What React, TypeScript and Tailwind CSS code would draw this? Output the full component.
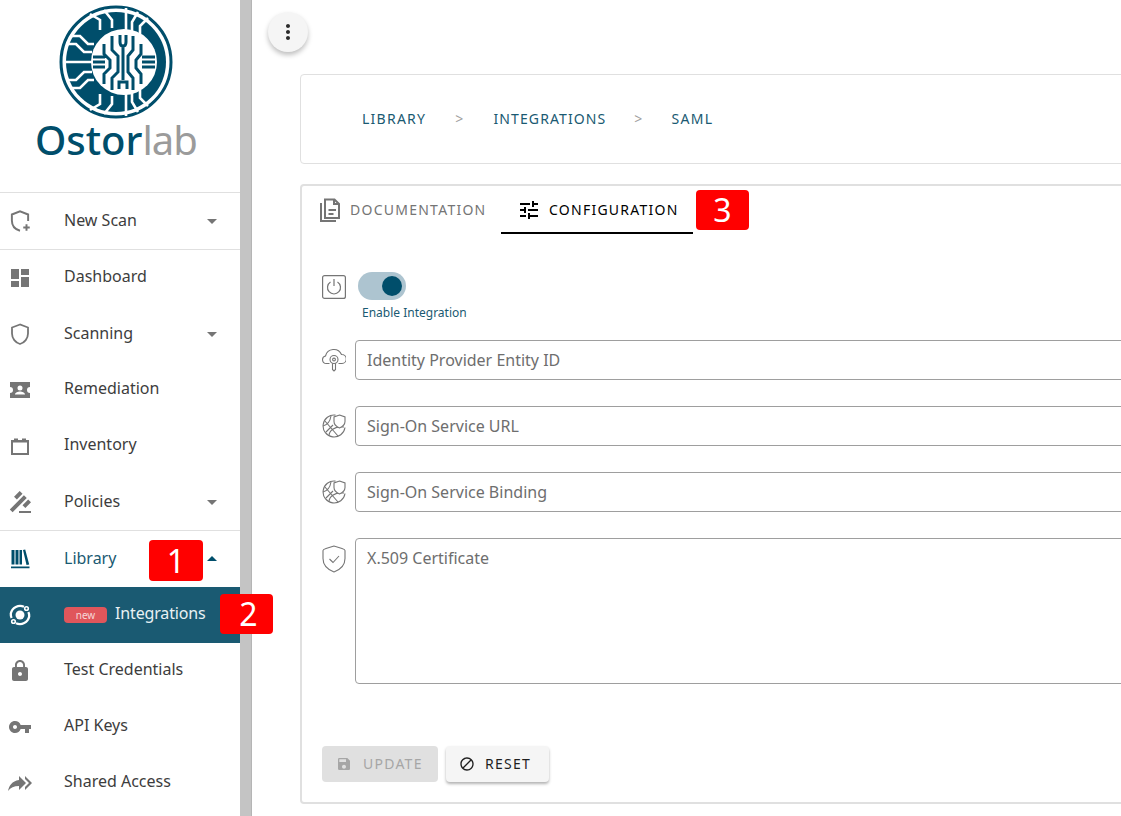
import { MdArrowDropDown, MdArrowDropUp, MdBlock, MdDashboard, MdGavel, MdLock, MdMoreVert, MdSave, MdTune, MdVpnKey } from "react-icons/md";

const font = { fontFamily: '"Noto Sans", sans-serif' };

function Logo() {
  const white = "M90 14 L100 20 L100 30 M104 10 L112 20 L112 28 M126 8 L126 32 M138 12 L132 22 L132 32 M148 18 L140 26 L140 34 M70 36 L80 36 L88 44 L94 44 M66 44 L76 44 L84 52 L92 52 M64 62 L92 62 M66 80 L76 80 L84 72 L92 72 M70 88 L80 88 L88 80 L94 80 M100 94 L100 104 L90 110 M112 96 L112 104 L104 114 M126 92 L126 116 M132 92 L132 102 L138 112 M140 90 L140 98 L148 106";
  const dark = "M120 35 L120 42 Q120 46 123 46 Q126 46 126 42 L126 35 M123 46 L123 80 M112 36 L112 50 L118 56 L118 72 L112 78 L112 90 M133 36 L133 50 L128 56 L128 72 L133 78 L133 90 M104 44 L104 54 L110 60 L110 68 L104 74 L104 84 M141 44 L141 54 L136 60 L136 68 L141 74 L141 84 M93 57 L105 57 M93 62 L105 62 M93 67 L105 67 M142 57 L155 57 M142 62 L155 62 M142 67 L155 67 M119 89 L119 82 L127 82 L127 89";
  return (
    <svg width="116" height="116" viewBox="58 4 116 116" className="block">
      <circle cx="116" cy="62" r="55" fill="none" stroke="#004e6b" strokeWidth="3" />
      <circle cx="116" cy="62" r="50" fill="#004e6b" />
      <circle cx="124" cy="62" r="33" fill="#fff" />
      <path d={white} fill="none" stroke="#fff" strokeWidth="2.6" />
      <path d={dark} fill="none" stroke="#004e6b" strokeWidth="3" />
    </svg>
  );
}

function ShieldPlus() {
  return (
    <svg viewBox="0 0 24 24" className="w-[26px] h-[26px] -ml-px" fill="none" stroke="#757575" strokeWidth="1.800">
      <path d="M19.500 12V6L12 3 4.500 6v5.500c0 4.800 3.200 8.300 7.500 9.500" />
      <path d="M18 15v6M15 18h6" />
    </svg>
  );
}

function Shield() {
  return (
    <svg viewBox="0 0 24 24" className="w-6 h-6" fill="none" stroke="#757575" strokeWidth="1.800">
      <path d="M12 2.500 4 5.500v6c0 5 3.400 9.200 8 10.500 4.600-1.300 8-5.500 8-10.500v-6z" />
    </svg>
  );
}

function Ticket() {
  return (
    <svg viewBox="0 0 24 24" className="w-6 h-6" fill="#757575">
      <path fillRule="evenodd" d="M2 4h20v5a3 3 0 0 0 0 6v5H2v-5a3 3 0 0 0 0-6zM12 7.500a2.500 2.500 0 1 0 0 5 2.500 2.500 0 0 0 0-5zM7 16.500h10c0-2-3-3-5-3s-5 1-5 3z" />
    </svg>
  );
}

function Box() {
  return (
    <svg viewBox="0 0 24 24" className="w-6 h-6" fill="#757575">
      <path fillRule="evenodd" d="M3 6h3V4.500h4V6h4V4.500h4V6h3v15H3zM5 8.500V19h14V8.500z" />
    </svg>
  );
}

function Books() {
  return (
    <svg viewBox="0 0 24 24" className="w-6 h-6" fill="#004e6b">
      <path d="M3.500 3h3v14.500h-3zM7.500 3h3v14.500h-3zM11.500 3h2.500v14.500h-2.500zM15 3l2.200-.5 4 15-2.700.5zM3 19.500h18.500v1.800H3z" />
    </svg>
  );
}

function Orbit() {
  return (
    <svg viewBox="0 0 24 24" className="w-6 h-6" fill="none" stroke="#fff" strokeWidth="2.300">
      <circle cx="12" cy="12" r="4.500" fill="#fff" stroke="none" />
      <path d="M16 3.800A9.500 9.500 0 0 0 2.800 10.500a9.500 9.500 0 0 0 .8 4.500M8 20.200a9.500 9.500 0 0 0 13.200-6.700 9.500 9.500 0 0 0-.8-4.500" />
      <circle cx="18.500" cy="5.500" r="1.800" strokeWidth="1.600" />
      <circle cx="5.500" cy="18.500" r="1.800" strokeWidth="1.600" />
    </svg>
  );
}

function ShareAll() {
  return (
    <svg viewBox="0 0 24 24" className="w-6 h-6" fill="#757575">
      <path d="M11 5l7 7-7 7v-4.100c-5 0-8.500 1.600-11 5.100 1-5 4-10 11-11zM17 8V5l7 7-7 7v-3l4-4z" />
    </svg>
  );
}

function DocIcon() {
  return (
    <svg viewBox="0 0 24 24" className="w-6 h-6" fill="none" stroke="#757575" strokeWidth="2">
      <path d="M7 1.500h9.500L21 6v14H7z" />
      <path d="M3 5v18h15M16 1.500V6h5M10.500 12H18M10.500 16h5" />
    </svg>
  );
}

function PowerBox() {
  return (
    <svg viewBox="0 0 24 24" className="w-6 h-6" fill="none" stroke="#757575" strokeWidth="1.200">
      <rect x="0.600" y="0.600" width="22.800" height="22.800" rx="2" />
      <path d="M8.500 7a6.500 6.500 0 1 0 7 0M12 4v7" />
    </svg>
  );
}

function CloudKey() {
  return (
    <svg viewBox="0 0 24 24" className="w-6 h-6" fill="none" stroke="#757575" strokeWidth="1.100">
      <path d="M7.500 15.500H4.500a3.800 3.800 0 0 1-1-7.500A8.500 8.500 0 0 1 19.500 6.500 4.500 4.500 0 0 1 20 15.500h-3.500" />
      <circle cx="12" cy="11.500" r="4" fill="#fff" />
      <circle cx="12" cy="11.500" r="1.400" />
      <path d="M10.500 15.300v6.200l1.500 1.500 1.500-1.500v-6.200" />
    </svg>
  );
}

function GlobeShield() {
  return (
    <svg viewBox="0 0 24 24" className="w-6 h-6" fill="none" stroke="#757575" strokeWidth="1.100">
      <path d="M13.500 1.100A11 11 0 1 0 23 13.500" />
      <path d="M1 12c4-1 7-4 8-10M2.500 6.500 16 22M7 22c0-5 5-10 15-9M4 18l7-7" />
      <path d="M17.500 1l5.500 2v4.500c0 3-2.300 5-5.500 6.500-3.200-1.500-5.500-3.500-5.500-6.500V3z" fill="#fff" />
    </svg>
  );
}

function ShieldCheck() {
  return (
    <svg viewBox="0 0 24 28" className="w-6 h-7" fill="none" stroke="#757575" strokeWidth="1.100">
      <path d="M12 1 4 3.500C2.500 4 1 4.500 1 5.500v8c0 6 4.500 11 11 13.500 6.500-2.500 11-7.500 11-13.500v-8c0-1-1.500-1.500-3-2z" />
      <path d="M7.500 14l3.500 3.500 6-6.500" />
    </svg>
  );
}

function NavRow({ icon, label, caret, active, accent, badge }: { icon: React.ReactNode; label: string; caret?: "up" | "down"; active?: boolean; accent?: boolean; badge?: boolean }) {
  return (
    <div className={`h-14 flex items-center relative ${active ? "bg-[#1a5a72] text-[#e8f1f4]" : accent ? "text-[#1a5a72]" : "text-[#3d3d3d]"}`}>
      <div className="w-[64px] pl-2 shrink-0 flex items-center">{icon}</div>
      {badge && (
        <span className="w-[43px] h-4 mr-2 rounded bg-[#e0565b] text-[#f6d6d7] text-[10px] leading-4 text-center">new</span>
      )}
      <span className={`text-base leading-6 ${caret ? "-mt-0.5" : "-mt-1"} ${badge ? "tracking-[-0.15px]" : ""}`}>{label}</span>
      {caret === "down" && <MdArrowDropDown className="absolute left-[200px] w-6 h-6 text-[#757575]" />}
      {caret === "up" && <MdArrowDropUp className="absolute left-[200px] w-6 h-6 text-[#004e6b]" />}
    </div>
  );
}

function Field({ icon, label, tall }: { icon: React.ReactNode; label: string; tall?: boolean }) {
  return (
    <div className={`flex ${tall ? "items-start" : "items-center"} gap-[9px] ml-5`}>
      <div className={`w-6 shrink-0 flex justify-center ${tall ? "mt-[7px]" : ""}`}>{icon}</div>
      <div className={`flex-1 border border-[#9e9e9e] rounded px-[11px] text-base text-[#6e6e6e] ${tall ? "h-[146px] py-[7px] leading-6" : "h-10 leading-[38px]"}`}>
        {label}
      </div>
    </div>
  );
}

function Marker({ n, className }: { n: string; className: string }) {
  return (
    <div className={`absolute bg-[#ff0000] rounded-sm text-white text-[32px] leading-none flex items-center justify-center ${className}`}>{n}</div>
  );
}

export default function App() {
  return (
    <div className="w-[1121px] h-[816px] overflow-hidden flex relative bg-white" style={font}>
      <aside className="w-[240px] shrink-0">
        <div className="h-[192px] relative">
          <div className="absolute left-[58px] top-[4px]"><Logo /></div>
          <div className="absolute left-[35px] top-[115px] text-[40px] leading-[50px] font-medium text-[#004e6b]">
            Ostor<span className="text-[#9b9b9b] font-normal tracking-[-1px]">lab</span>
          </div>
        </div>
        <div className="border-y border-[#e0e0e0]">
          <NavRow icon={<ShieldPlus />} label="New Scan" caret="down" />
        </div>
        <NavRow icon={<MdDashboard className="w-6 h-6 text-[#757575]" />} label="Dashboard" />
        <NavRow icon={<Shield />} label="Scanning" caret="down" />
        <NavRow icon={<Ticket />} label="Remediation" />
        <NavRow icon={<Box />} label="Inventory" />
        <NavRow icon={<MdGavel className="w-6 h-6 text-[#757575] -scale-x-100" />} label="Policies" caret="down" />
        <div className="border-t border-[#e0e0e0]">
          <NavRow icon={<Books />} label="Library" caret="up" accent />
        </div>
        <NavRow icon={<Orbit />} label="Integrations" active badge />
        <NavRow icon={<MdLock className="w-6 h-6 text-[#757575]" />} label="Test Credentials" />
        <NavRow icon={<MdVpnKey className="w-6 h-6 text-[#757575]" />} label="API Keys" />
        <NavRow icon={<ShareAll />} label="Shared Access" />
      </aside>
      <div className="w-3 shrink-0 bg-[#c4c4c4] border-r border-[#b5b5b5]" />
      <main className="flex-1 min-w-0">
        <button className="mt-3 ml-4 w-10 h-10 rounded-full bg-[#f5f5f5] shadow-[0_3px_5px_rgba(0,0,0,0.25)] flex items-center justify-center">
          <MdMoreVert className="w-6 h-6 text-[#2b2b2b]" />
        </button>
        <div className="mt-[22px] ml-12 w-[900px] h-[90px] border border-[#e0e0e0] rounded flex items-center pl-[61px] text-sm tracking-[1.25px] text-[#1a5a72]">
          <span>LIBRARY</span>
          <span className="mx-[29px] text-[#9e9e9e]">&gt;</span>
          <span className="tracking-[1.1px]">INTEGRATIONS</span>
          <span className="mx-[28px] text-[#9e9e9e]">&gt;</span>
          <span>SAML</span>
        </div>
        <div className="mt-5 ml-12 w-[900px] h-[620px] border-2 border-[#e0e0e0] rounded">
          <div className="h-12 flex text-sm tracking-[1.25px]">
            <div className="w-[199px] pl-4 flex items-center gap-[8px] text-[#757575]">
              <DocIcon />
              <span>DOCUMENTATION</span>
            </div>
            <div className="w-[192px] pl-4 pt-0.5 flex items-center gap-2 text-black border-b-2 border-black">
              <MdTune className="w-6 h-6" />
              <span>CONFIGURATION</span>
            </div>
          </div>
          <div className="pt-[38px]">
            <div className="flex items-start ml-5 h-[54px]">
              <div className="mt-[3px]"><PowerBox /></div>
              <div className="ml-3">
                <div className="w-12 h-7 rounded-full bg-[#adc4d0] flex items-center justify-end pr-1">
                  <div className="w-5 h-5 rounded-full bg-[#004e6b]" />
                </div>
                <div className="ml-1 mt-[3px] text-xs leading-5 text-[#1a5a72] whitespace-nowrap">Enable Integration</div>
              </div>
            </div>
            <div className="flex flex-col gap-[26px] mt-[14px]">
              <Field icon={<CloudKey />} label="Identity Provider Entity ID" />
              <Field icon={<GlobeShield />} label="Sign-On Service URL" />
              <Field icon={<GlobeShield />} label="Sign-On Service Binding" />
              <Field icon={<ShieldCheck />} label="X.509 Certificate" tall />
            </div>
            <div className="flex gap-2 ml-5 mt-[62px] text-sm tracking-[1.25px]">
              <div className="w-[116px] h-9 rounded bg-[#e0e0e0] text-[#a6a6a6] flex items-center pl-[14px] gap-[11px]">
                <MdSave className="w-4 h-4" />
                <span>UPDATE</span>
              </div>
              <div className="w-[103px] h-9 rounded bg-[#f5f5f5] text-[#1f1f1f] shadow-[0_2px_3px_rgba(0,0,0,0.3)] flex items-center pl-[13px] gap-[10px]">
                <MdBlock className="w-4 h-4" />
                <span>RESET</span>
              </div>
            </div>
          </div>
        </div>
      </main>
      <Marker n="1" className="left-[149px] top-[540px] w-[54px] h-[41px]" />
      <Marker n="2" className="left-[220px] top-[594px] w-[53px] h-10 pl-1" />
      <Marker n="3" className="left-[696px] top-[190px] w-[53px] h-10" />
    </div>
  );
}
